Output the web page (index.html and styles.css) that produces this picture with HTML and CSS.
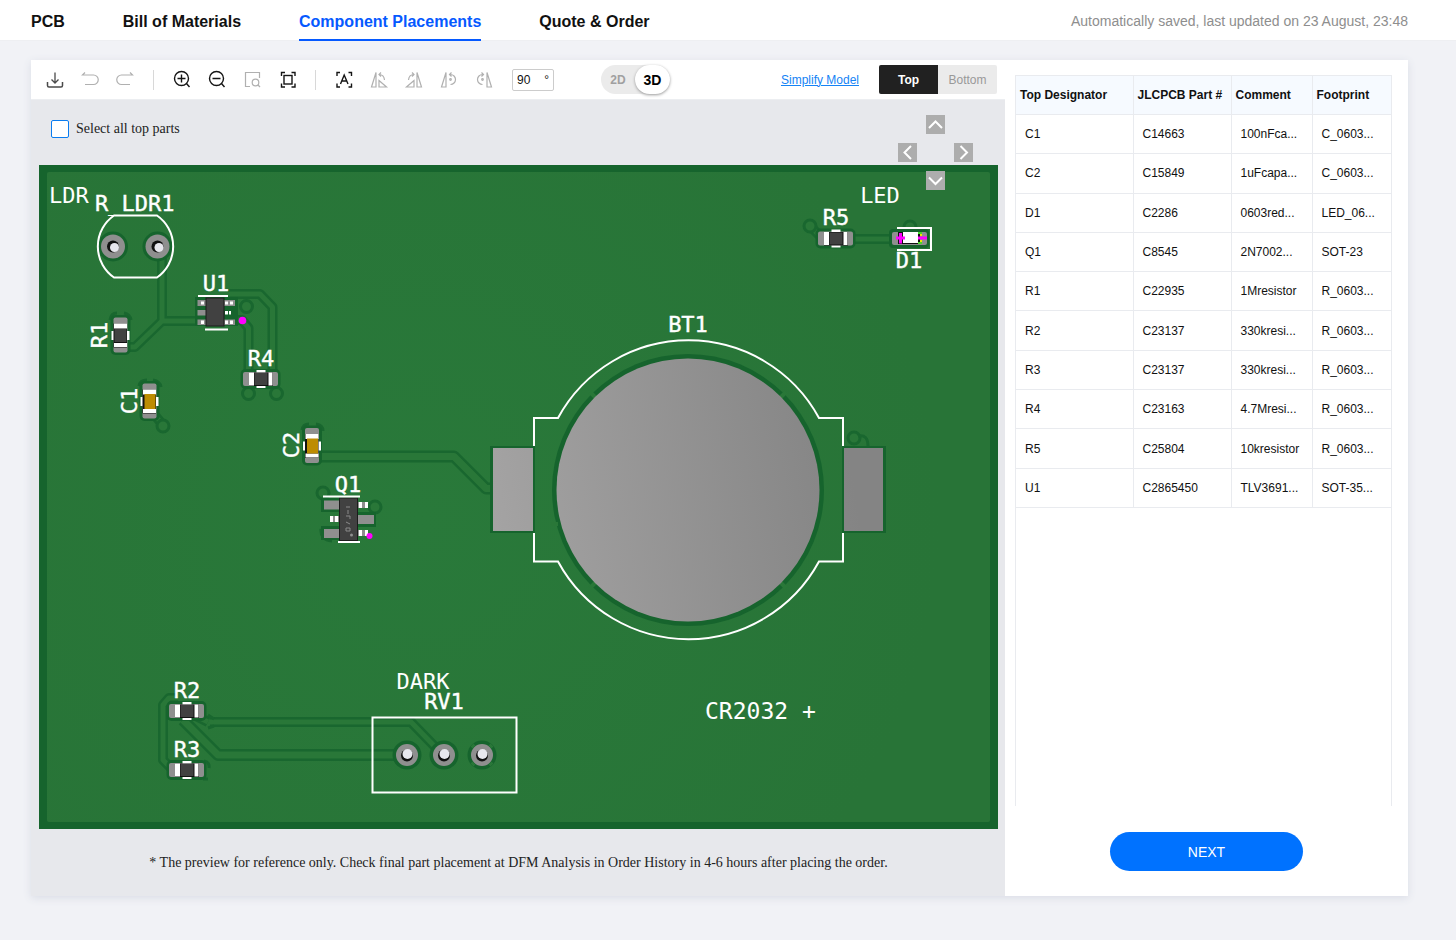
FILE: index.html
```html
<!DOCTYPE html>
<html lang="en">
<head>
<meta charset="utf-8">
<title>Component Placements</title>
<link rel="stylesheet" href="styles.css">
</head>
<body>
<header class="topbar">
  <nav class="steps">
    <a class="step" href="#pcb">PCB</a>
    <a class="step" href="#bom">Bill of Materials</a>
    <a class="step step-active" href="#placements">Component Placements</a>
    <a class="step" href="#quote">Quote &amp; Order</a>
  </nav>
  <p class="saved">Automatically saved, last updated on 23 August, 23:48</p>
</header>

<main class="workspace">
  <section class="viewer">
    <div class="toolbar">
      <div class="tools">
        <button class="tool tool-mid" aria-label="Download"><svg viewBox="0 0 20 20"><path d="M10 2.500V13M6.500 9.500L10 13L13.500 9.500" stroke-width="1.300"/><path d="M2.500 12V15.500Q2.500 17 4 17H16Q17.500 17 17.500 15.500V12" stroke-width="1.500"/></svg></button>
        <button class="tool tool-off" aria-label="Undo"><svg viewBox="0 0 20 20"><path d="M5 2.500L2.500 5H13.500A4.500 4.500 0 0 1 13.500 14.500H5"/></svg></button>
        <button class="tool tool-off" aria-label="Redo"><svg viewBox="0 0 20 20"><path d="M15 2.500L17.500 5H6.500A4.500 4.500 0 0 0 6.500 14.500H15"/></svg></button>
      </div>
      <span class="rule"></span>
      <div class="tools">
        <button class="tool" aria-label="Zoom in"><svg viewBox="0 0 20 20"><circle cx="9.500" cy="8.500" r="7"/><path d="M9.500 4.500V12.500M5.500 8.500H13.500M14.500 13.500L17.500 17"/></svg></button>
        <button class="tool" aria-label="Zoom out"><svg viewBox="0 0 20 20"><circle cx="9.500" cy="8.500" r="7"/><path d="M5.500 8.500H13.500M14.500 13.500L17.500 17"/></svg></button>
        <button class="tool tool-off" aria-label="Zoom to area"><svg viewBox="0 0 20 20"><path d="M8 16.500H3.500V2.500H17.500V8M17.500 5"/><circle cx="13.500" cy="12.500" r="3.300"/><path d="M16 15L18 17"/></svg></button>
        <button class="tool" aria-label="Fit to screen"><svg viewBox="0 0 20 20"><rect x="7" y="5.500" width="8" height="8.500"/><path d="M4.500 6V2.500H8M14.500 2.500H18V6M18 13.500V17H14.500M8 17H4.500V13.500"/></svg></button>
      </div>
      <span class="rule"></span>
      <div class="tools">
        <button class="tool" aria-label="Show designators"><svg viewBox="0 0 20 20"><path d="M3 6V2.500H6M14.500 2.500H17.500V6M17.500 13.500V17H14.500M6 17H3V13.500M6.500 14L10.200 5L14 14M8 11H12.500"/></svg></button>
        <button class="tool tool-off" aria-label="Rotate left"><svg viewBox="0 0 20 20"><path d="M7 2.500V17H2.500ZM10 10.500L17.500 17H10ZM10 4.500Q15 4.500 15.500 10M12 2.500L10 4.500L12 6.500"/></svg></button>
        <button class="tool tool-off" aria-label="Rotate right"><svg viewBox="0 0 20 20"><path d="M13 2.500V17H17.500ZM10 10.500L2.500 17H10ZM10 4.500Q5 4.500 4.500 10M8 2.500L10 4.500L8 6.500"/></svg></button>
        <button class="tool tool-off" aria-label="Rotate each left"><svg viewBox="0 0 20 20"><path d="M7 2.500V17H2.500ZM10.500 4.500H11.500A5 5 0 0 1 11.500 14.500M12.500 2.500L10.500 4.500L12.500 6.500"/><circle cx="11.500" cy="9.500" r=".8"/></svg></button>
        <button class="tool tool-off" aria-label="Rotate each right"><svg viewBox="0 0 20 20"><path d="M13 2.500V17H17.500ZM9.500 4.500H8.500A5 5 0 0 0 8.500 14.500M7.500 2.500L9.500 4.500L7.500 6.500"/><circle cx="8.500" cy="9.500" r=".8"/></svg></button>
      </div>
      <label class="angle"><input class="angle-input" type="text" value="90" aria-label="Rotation angle"><span>°</span></label>
      <div class="mode">
        <button class="mode-item">2D</button>
        <button class="mode-item mode-on">3D</button>
      </div>
      <a class="simplify" href="#simplify">Simplify Model</a>
      <div class="sides">
        <button class="side side-on">Top</button>
        <button class="side">Bottom</button>
      </div>
    </div>

    <div class="stage">
      <label class="select-all"><input class="check" type="checkbox">Select all top parts</label>
      <svg class="board" viewBox="39 165 959 664" role="img" aria-label="Board preview">
        <defs>
          <linearGradient id="steel" gradientUnits="userSpaceOnUse" x1="493" y1="520" x2="850" y2="460">
            <stop offset="0" stop-color="#a4a3a3"/><stop offset="1" stop-color="#848484"/>
          </linearGradient>
          <radialGradient id="mask" gradientUnits="userSpaceOnUse" cx="420" cy="520" r="520">
            <stop offset="0" stop-color="#29793a"/><stop offset="1" stop-color="#287437"/>
          </radialGradient>
          <g id="traces">
            <path d="M162 250V321H204M120 347H135L162 321"/>
            <path d="M225 294H260L272.500 307V374M234 320H242L248.500 328V374"/>
            <path d="M152 412L163 425"/>
            <path d="M178 698H169L163 705V760L172 769H186"/>
            <path d="M210 722H411L443 755"/>
            <path d="M850 239H895M810 226L822 238"/>
            <path d="M186 711L208 722"/>
          </g>
          <g id="wide-traces">
            <path d="M316 456.500H454L486 488.500H493"/>
            <path d="M183 720L218 755H407"/>
          </g>
          <g id="chip">
            <rect class="clear" x="-20" y="-10" width="40" height="20" rx="5"/>
            <rect class="pad" x="-17.500" y="-7" width="35" height="14" rx="2"/>
            <path class="white" d="M-4 -9H5V9H-4Z"/>
            <rect class="black" x="-11.500" y="-6.500" width="24" height="13.500"/>
            <rect class="white" x="-11.500" y="-6.500" width="5" height="13"/>
            <rect class="white" x="8" y="-6.500" width="4" height="13"/>
          </g>
          <g id="resistor"><use href="#chip"/><rect class="body" x="-6" y="-6" width="13" height="12"/></g>
          <g id="capacitor"><use href="#chip"/><rect class="gold" x="-7" y="-6" width="15" height="11"/></g>
          <g id="via"><circle r="6"/></g>
          <g id="hole-l">
            <circle class="clear" r="15"/><circle class="pad" r="12"/>
            <circle class="black" r="6"/><circle class="shine" cx="1.500" cy="1" r="4.500"/>
          </g>
          <g id="hole-s">
            <circle class="clear" r="14.500"/><circle class="pad" r="11"/>
            <circle class="black" cy=".5" r="6"/><circle class="shine" cx=".5" cy="-1" r="5"/>
          </g>
        </defs>

        <rect class="edge" x="39" y="165" width="959" height="664"/>
        <rect x="47" y="172" width="943" height="650" rx="2" fill="url(#mask)"/>

        <g class="trace-edge"><use href="#traces"/></g>
        <g class="trace-edge wide"><use href="#wide-traces"/></g>
        <g class="trace-core"><use href="#traces"/></g>
        <g class="trace-core wide"><use href="#wide-traces"/></g>
        <g class="vias">
          <use href="#via" x="246.500" y="306.500"/><use href="#via" x="248.500" y="393.500"/><use href="#via" x="276.500" y="393.500"/>
          <use href="#via" x="163" y="426"/><use href="#via" x="323" y="493"/><use href="#via" x="375" y="507"/>
          <use href="#via" x="810" y="226"/><use href="#via" x="910" y="227"/><use href="#via" x="854" y="438"/>
          <path d="M858 436Q868 434 868 446M110 320Q111 313 117 313M124 313Q130 314 131 320M139 386Q140 380 147 380M153 380Q160 381 161 387M302 430Q303 424 309 424M316 424Q323 425 323 431M321 529Q320 540 332 541M204 761Q210 762 209 768M203 779H208M208 715L214 719M208 728L214 726"/>
        </g>

        <!-- light sensor -->
        <use href="#hole-l" x="113" y="246.500"/><use href="#hole-l" x="157.500" y="246.500"/>
        <path class="silk" d="M114 215.500H157A37.800 37.800 0 0 1 157 277.500H114A37.800 37.800 0 0 1 114 215.500Z"/>

        <use href="#resistor" transform="translate(120.500 335) rotate(90)"/>
        <use href="#capacitor" transform="translate(149.500 401) rotate(90)"/>
        <use href="#capacitor" transform="translate(312 445.500) rotate(90)"/>
        <use href="#resistor" transform="translate(260.500 379)"/>
        <use href="#resistor" transform="translate(186.500 711)"/>
        <use href="#resistor" transform="translate(186.500 770)"/>
        <use href="#resistor" transform="translate(835.500 238.500)"/>

        <!-- comparator -->
        <path class="clear" d="M195 297H238V326H195Z"/>
        <path class="pad" d="M197.500 300H235V306H197.500ZM197.500 310H206V315.500H197.500ZM197.500 319.500H235V325H197.500Z"/>
        <path class="white" d="M201 301.500H204V304.500H201ZM201 320.500H204V324H201ZM225 301.500H228V304.500H225ZM230 301.500H233V304.500H230ZM225 311H228V314.500H225ZM229 311H231V314.500H229ZM225 320.500H228V324H225ZM230 320.500H233V324H230Z"/>
        <rect class="body outlined" x="206" y="298" width="18" height="28"/>
        <path class="silk" d="M198 296H228M205 329.500H228"/>
        <circle class="pin-one" cx="242.500" cy="320.500" r="3.800"/>

        <!-- transistor -->
        <path class="clear" d="M321 498H341V512H321ZM321 526H341V540H321ZM355 512H376V527H355Z"/>
        <path class="pad" d="M324 500.500H340V509.500H324ZM324 529H340V538H324ZM357 515H374V524H357ZM357 502H368V508H357ZM357 530H368V536H357ZM330 516H340V522H330Z"/>
        <path class="white" d="M330 516H333V522H330ZM335 516H338V522H335ZM359 502H362V508H359ZM365 502H368V508H365ZM359 530H362V536H359ZM365 530H368V536H365Z"/>
        <rect class="body outlined" x="339.500" y="498" width="18" height="42.500"/>
        <path class="marking" d="M346 507H350M348 510V514M346 516H350V519M346 522L350 524M346 528H350V531H346Z"/>
        <circle class="pad" cx="351.500" cy="535" r="1.500"/>
        <path class="silk" d="M323 496.500H360M338 542H360"/>
        <circle class="pin-one" cx="369.500" cy="536" r="3"/>

        <!-- coin cell -->
        <path class="clear" d="M490 446H535V533H490ZM842 446H886V533H842Z"/>
        <path fill="url(#steel)" d="M493 448H533V531H493ZM844 448H883V531H844Z"/>
        <circle class="clear" cx="688" cy="490" r="136"/>
        <path class="gaps" d="M590 392L597 399M786 392L779 399M590 588L597 581M786 588L779 581M551 524H558"/>
        <circle cx="688" cy="490" r="131.500" fill="url(#steel)"/>
        <path class="silk" d="M534 446V418H558A148.500 148.500 0 0 1 819 418H843V446M534 533V561.500H558A148.500 148.500 0 0 0 819 561.500H843V533"/>

        <!-- indicator -->
        <rect class="clear" x="889" y="229" width="40" height="19" rx="4"/>
        <rect class="pad" x="892" y="232" width="35" height="13" rx="2"/>
        <path class="black" d="M898 232H920V244H898Z"/>
        <path class="white" d="M903 232H918V243H903Z"/>
        <path class="silk" d="M897 228H931V250H897"/>
        <path class="leaf" d="M918 233H922M918 243H922"/>
        <path class="lemon" d="M920 235H922M920 241H922"/>
        <path class="cross" d="M896 238H905M900.500 233V243.500M918 238H927"/>

        <!-- trimmer -->
        <use href="#hole-s" x="407" y="755"/><use href="#hole-s" x="444" y="755"/><use href="#hole-s" x="482" y="755"/>
        <path class="gaps" d="M492 745L490 747M472 745L474 747M492 765L490 763M472 765L474 763"/>
        <rect class="silk" x="372.500" y="717.500" width="144" height="75"/>

        <g class="names">
          <text x="49" y="203">LDR</text>
          <text class="thick" x="95" y="211">R_LDR1</text>
          <g class="mid">
            <text x="880" y="203">LED</text>
            <text x="423" y="689">DARK</text>
          </g>
          <g class="mid thick">
            <text x="216" y="291">U1</text>
            <text x="261" y="366">R4</text>
            <text x="348" y="492">Q1</text>
            <text x="688" y="332">BT1</text>
            <text x="836" y="225">R5</text>
            <text x="909" y="268">D1</text>
            <text x="444" y="709">RV1</text>
            <text x="187" y="698">R2</text>
            <text x="187" y="757">R3</text>
            <text transform="translate(107 335) rotate(-90)">R1</text>
            <text transform="translate(137 401) rotate(-90)">C1</text>
            <text transform="translate(299 445) rotate(-90)">C2</text>
          </g>
          <text class="cell" x="705" y="719">CR2032 +</text>
        </g>
      </svg>
      <p class="note">* The preview for reference only. Check final part placement at DFM Analysis in Order History in 4-6 hours after placing the order.</p>
      <div class="pan">
        <button class="pan-key pan-up" aria-label="Pan up"><svg viewBox="0 0 19 19"><path d="M3 13L9.500 6.500L16 13"/></svg></button>
        <button class="pan-key pan-left" aria-label="Pan left"><svg viewBox="0 0 19 19"><path d="M13 3L6.500 9.500L13 16"/></svg></button>
        <button class="pan-key pan-right" aria-label="Pan right"><svg viewBox="0 0 19 19"><path d="M6.500 3L13 9.500L6.500 16"/></svg></button>
        <button class="pan-key pan-down" aria-label="Pan down"><svg viewBox="0 0 19 19"><path d="M3 6.500L9.500 13L16 6.500"/></svg></button>
      </div>
    </div>
  </section>

  <aside class="panel">
    <div class="parts-wrap">
      <table class="parts">
        <colgroup><col class="col-name"><col class="col-part"><col class="col-comment"><col></colgroup>
        <thead><tr><th>Top Designator</th><th>JLCPCB Part #</th><th>Comment</th><th>Footprint</th></tr></thead>
        <tbody>
          <tr><td>C1</td><td>C14663</td><td>100nFca...</td><td>C_0603...</td></tr>
          <tr><td>C2</td><td>C15849</td><td>1uFcapa...</td><td>C_0603...</td></tr>
          <tr><td>D1</td><td>C2286</td><td>0603red...</td><td>LED_06...</td></tr>
          <tr><td>Q1</td><td>C8545</td><td>2N7002...</td><td>SOT-23</td></tr>
          <tr><td>R1</td><td>C22935</td><td>1Mresistor</td><td>R_0603...</td></tr>
          <tr><td>R2</td><td>C23137</td><td>330kresi...</td><td>R_0603...</td></tr>
          <tr><td>R3</td><td>C23137</td><td>330kresi...</td><td>R_0603...</td></tr>
          <tr><td>R4</td><td>C23163</td><td>4.7Mresi...</td><td>R_0603...</td></tr>
          <tr><td>R5</td><td>C25804</td><td>10kresistor</td><td>R_0603...</td></tr>
          <tr><td>U1</td><td>C2865450</td><td>TLV3691...</td><td>SOT-35...</td></tr>
        </tbody>
      </table>
    </div>
    <button class="next">NEXT</button>
  </aside>
</main>
</body>
</html>
```
FILE: styles.css
```css
* { box-sizing: border-box; }

body {
  margin: 0;
  min-height: 100vh;
  background: #f1f2f6;
  color: #111;
  font-family: "Liberation Sans", Arial, sans-serif;
  font-size: 12px;
}

button, input { font: inherit; color: inherit; }
button { padding: 0; border: 0; background: none; cursor: pointer; }

.topbar {
  display: flex;
  justify-content: space-between;
  padding: 0 48px 0 31px;
  height: 41px;
  background: #fff;
  border-bottom: 1px solid #eeeff2;
}
.steps { display: flex; gap: 58px; }
.step {
  height: 41px;
  line-height: 44px;
  font-size: 16px;
  font-weight: bold;
  color: #111;
  text-decoration: none;
}
.step-active { color: #0559ff; border-bottom: 2px solid #0559ff; }
.saved { margin: 0; font-size: 14px; line-height: 42px; color: #8e8e8e; }

.workspace {
  display: flex;
  margin: 19px 48px 44px 31px;
  background: #fff;
  box-shadow: 0 2px 8px #dadde6;
}
.viewer { flex: 1; min-width: 0; display: flex; flex-direction: column; }

.toolbar {
  display: flex;
  align-items: center;
  gap: 18px;
  height: 40px;
  padding: 0 8px 0 14px;
  border-bottom: 1px solid #eceef1;
}
.tools { display: flex; gap: 15px; }
.tool { width: 20px; height: 20px; color: #151515; }
.tool svg {
  display: block;
  fill: none;
  stroke: currentColor;
  stroke-width: 1.4;
}
.tool-mid { color: #4a4a4a; }
.tool-off { color: #b0b0b0; }
.tool-off svg { stroke-width: 1.2; }
.rule { width: 1px; height: 20px; background: #d8d8d8; }
.angle {
  display: flex;
  justify-content: space-between;
  width: 42px;
  height: 22px;
  padding: 0 4px;
  border: 1px solid #ccc;
  border-radius: 2px;
  line-height: 20px;
}
.angle-input { width: 20px; padding: 0; border: 0; outline: 0; background: none; }

.mode {
  display: flex;
  margin-left: 29px;
  height: 29px;
  border-radius: 15px;
  background: #ebebeb;
  font-weight: bold;
  color: #a0a0a0;
}
.mode-item { width: 34px; border-radius: 15px; }
.mode-on { width: 35px; background: #fff; color: #000; font-size: 14px; box-shadow: 0 1px 3px #999; }
.simplify { margin-left: auto; margin-right: 2px; color: #1583f5; }
.sides { display: flex; height: 29px; border-radius: 2px; overflow: hidden; background: #ebebeb; color: #999; }
.side { width: 59px; }
.side-on { background: #212121; color: #fff; font-weight: bold; }

.stage {
  position: relative;
  flex: 1;
  padding: 0 7px 0 8px;
  background: #e7e8ec;
  font-family: "Liberation Serif", "Times New Roman", serif;
  font-size: 14px;
}
.select-all {
  display: flex;
  align-items: center;
  gap: 7px;
  width: max-content;
  height: 65px;
  padding: 0 0 8px 12px;
  color: #222;
}
.check {
  appearance: none;
  width: 18px;
  height: 18px;
  margin: 0;
  border: 1px solid #0a7cf0;
  border-radius: 2px;
  background: #fff;
}
.board { display: block; width: 100%; }
.note { margin: 0; padding: 24px 0 23px; line-height: 20px; text-align: center; color: #222; }

.pan {
  position: absolute;
  top: 15px;
  right: 32px;
  display: grid;
  grid-template-columns: repeat(3, 19px);
  grid-template-rows: repeat(3, 19px);
  gap: 9px;
}
.pan-key { background: #adadad; }
.pan-key svg { display: block; fill: none; stroke: #fff; stroke-width: 2; }
.pan-up { grid-area: 1 / 2; }
.pan-left { grid-area: 2 / 1; }
.pan-right { grid-area: 2 / 3; }
.pan-down { grid-area: 3 / 2; }

.edge, .clear { fill: #16642d; }
.trace-edge, .trace-core { fill: none; stroke-linejoin: round; }
.trace-edge { stroke: #19672f; stroke-width: 10; }
.trace-core { stroke: #297738; stroke-width: 5; }
.trace-edge.wide { stroke-width: 12; }
.trace-core.wide { stroke-width: 7; }
.vias { fill: #297738; stroke: #19672f; stroke-width: 3; }
.vias path { fill: none; }
.pad { fill: #8f8f8f; }
.white { fill: #fff; }
.shine { fill: #e8e8ee; }
.black { fill: #111; }
.body { fill: #414141; }
.outlined { stroke: #1c1c1c; stroke-width: 1; }
.gold { fill: #bd8c02; }
.pin-one { fill: #f0f; }
.silk { fill: none; stroke: #fff; stroke-width: 2; }
.gaps { stroke: #297738; stroke-width: 4; }
.marking { fill: none; stroke: #8a8a8a; stroke-width: 1; }
.leaf { stroke: #49d82c; stroke-width: 2; }
.lemon { stroke: #f3e600; stroke-width: 2; }
.cross { stroke: #f0f; stroke-width: 3; }
.names { fill: #fff; font-family: "DejaVu Sans Mono", monospace; font-size: 22px; }
.mid { text-anchor: middle; }
.thick { stroke: #fff; stroke-width: .4; }
.cell { font-size: 23px; }

.panel {
  display: flex;
  flex-direction: column;
  width: 403px;
  padding: 15px 0 25px;
}
.parts-wrap {
  flex: 1;
  margin: 0 16px 26px 10px;
  border: solid #e9ebef;
  border-width: 0 1px;
}
.parts {
  width: 100%;
  height: 433px;
  border-collapse: collapse;
  table-layout: fixed;
}
.col-name { width: 117px; }
.col-part { width: 98px; }
.col-comment { width: 81px; }
.parts th, .parts td {
  padding: 0 9px;
  border: 1px solid #e9ebef;
  border-width: 1px 0 1px 1px;
  text-align: left;
  white-space: nowrap;
}
.parts th { height: 39px; padding: 0 4px; background: #f6faff; }
.parts th:first-child, .parts td:first-child { border-left: 0; }
.next {
  align-self: center;
  width: 193px;
  height: 39px;
  border-radius: 20px;
  background: #0072ff;
  color: #fff;
  font-size: 14px;
}
```
